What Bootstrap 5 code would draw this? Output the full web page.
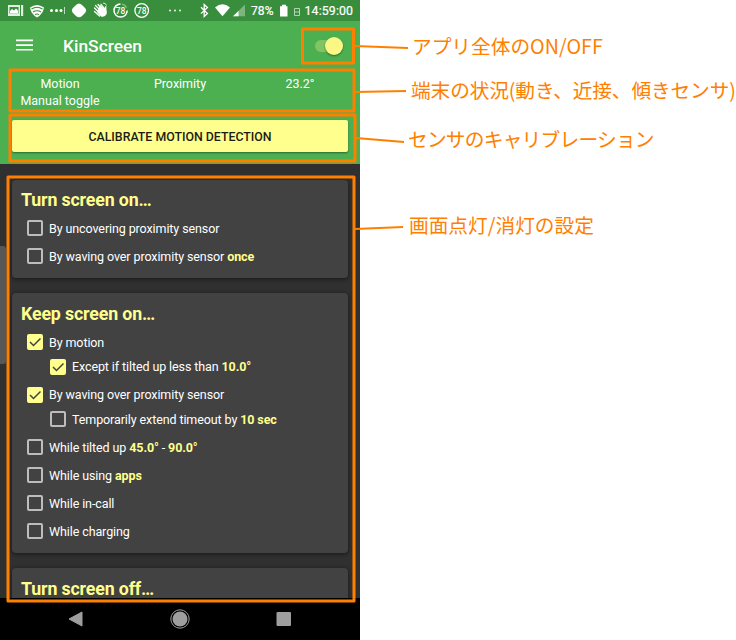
<!DOCTYPE html>
<html lang="ja">
<head>
<meta charset="utf-8">
<meta name="viewport" content="width=device-width, initial-scale=1">
<title>KinScreen</title>
<link href="https://cdn.jsdelivr.net/npm/bootstrap@5.3.0/dist/css/bootstrap.min.css" rel="stylesheet">
<style>
body{width:736px;height:640px;overflow:hidden;background:#fff;font-family:Roboto,"Noto Sans CJK JP",sans-serif;font-size:12.5px;line-height:17px}
.phone{width:360px;height:640px;background:#303030;color:#fff}
.statusbar{height:21px;background:#388e3c;flex:none}
.statusbar svg{display:block}
.appbar{height:143px;background:#4caf50;flex:none}
.toolbar{height:49px;padding:0 16px}
.toolbar>svg{margin-bottom:2px}
.app-title{font-size:17.4px;font-weight:500;margin:1px 0 0 30px}
.toggle-track{width:28px;height:12px;border-radius:6px;background:#81c462;margin-right:1px}
.toggle-thumb{width:18px;height:18px;border-radius:50%;background:#fbf785;box-shadow:0 1px 2px #0006}
.stats{height:50px;padding:5px 0 0}
.stats>div{width:120px}
.calibrate{margin:0 12px;height:32px;width:336px;border-radius:2px;background:#ffff8d;color:#1c1c12;font-size:12.35px;font-weight:500;box-shadow:0 1px 2px #0006;padding:2px 0 0;border:0}
.scroller{padding:16px 12px 0;gap:15px}
.scrollthumb{left:0;top:82px;width:6px;height:118px;background:#575757;border-radius:0 3px 3px 0}
.panel{background:#424242;border-radius:4px;box-shadow:0 1px 4px #0008;flex:none;padding:7px 9px 0;font-size:12.5px;letter-spacing:-.1px}
.panel+.panel{padding-top:8px}
.panel h2{font-size:17.8px;line-height:26px;font-weight:700;color:#ffff8d;margin:0 0 1px;letter-spacing:-.15px}
.opt{height:28px;padding-left:6px}
.sub{height:24.5px;padding:0 0 3px 29px}
.opt b,.sub b{color:#ffff8d;font-weight:700}
.box{width:16px;height:16px;border:2px solid #bdbdbd;border-radius:2px;margin-right:6px;flex:none}
.box.on{background:#ffff8d;border-color:#ffff8d}
.box svg{display:block}
.navkeys{height:42px;background:#000;flex:none}
.navkeys svg{display:block}
.marks{left:0;top:0;pointer-events:none}
.note{color:#ff8000;font-family:"Noto Sans CJK JP",sans-serif;font-size:19.7px;line-height:28px;white-space:nowrap}
.tight{letter-spacing:-.75px}
.snug{letter-spacing:-.12px}
</style>
</head>
<body class="position-relative">
<main class="phone d-flex flex-column">
  <div class="statusbar">
    <svg width="360" height="21" fill="#fff" font-family="Roboto,sans-serif">
      <path d="M8 5h12v11H8zM21 5h2.200v11H21z" opacity=".85"/>
      <path d="M9.500 7h9v6.500h-9z" fill="#388e3c"/><path d="M10 13.500V11l2-2 2 1.500 2-2 2 2v3z"/>
      <path d="M30 7.500Q37 2.500 44 7.500Q43 14 37 17.500Q31 14 30 7.500z"/>
      <path d="M31.500 9Q37 5.500 42.500 9M33 12Q37 9.500 41 12M35 14.500Q37 13.500 39 14.500" fill="none" stroke="#388e3c" stroke-width="1.200"/>
      <circle cx="51.500" cy="10.500" r="1.500"/><circle cx="56.500" cy="10.500" r="1.500"/><circle cx="61" cy="10.500" r="1.500"/><path d="M64 7h1v7h-1z" opacity=".7"/>
      <path d="M79 3.500Q80.500 3.500 82 5L84.800 7.800Q87.500 10.500 84.800 13.200L82 16Q79 18.500 76 16L73.200 13.200Q70.500 10.500 73.200 7.800L76 5Q77.500 3.500 79 3.500z"/>
      <path d="M97 12l4 4.500q3 1 5-1.500 1.500-2 .5-5l-.2-4q-1.800-.2-1.600 3l-4.500-4z"/>
      <path d="M94.500 8l5 5M95.500 5.500l6 6M98 4.500l5.500 6M101 4.300l4 5M94.500 11.500l5 4.500" stroke="#fff" stroke-width="1.300" stroke-linecap="round"/>
      <path d="M103 3q3 0 3.500 2.500" fill="none" stroke="#fff" stroke-width=".8"/>
      <path d="M120.500 3.900A6.600 6.600 0 1 0 127.200 10.500" fill="none" stroke="#fff" stroke-width="1.500"/><path d="M122 4.100a6.600 6.600 0 0 1 4.500 3.500" fill="none" stroke="#fff" stroke-width="1.400" opacity=".45"/>
      <text x="115.700" y="14" font-size="9.300" font-weight="500" textLength="9.600" lengthAdjust="spacingAndGlyphs">78</text>
      <circle cx="141.700" cy="10.500" r="6.800" fill="none" stroke="#fff" stroke-width="1.300"/>
      <text x="136.900" y="14" font-size="9.300" font-weight="500" textLength="9.600" lengthAdjust="spacingAndGlyphs">78</text>
      <circle cx="170" cy="10.500" r=".9"/><circle cx="175" cy="10.500" r=".9"/><circle cx="180" cy="10.500" r=".9"/>
      <path d="M201 7.200l6.400 6.400-3.200 2.900V4.500l3.200 2.900-6.400 6.200" fill="none" stroke="#fff" stroke-width="1.300"/>
      <path d="M215 7.500Q222.500 1.200 230 7.500L222.500 16.200z"/>
      <path d="M245 4.500v11.800h-12z" opacity=".35"/><path d="M238.500 11v5.300H233z"/>
      <text x="251" y="15.200" font-size="12" textLength="22.500" stroke="#fff" stroke-width=".2">78%</text>
      <path d="M282 4.700h4v1.500h1.500v10.200H280V6.200h2z"/>
      <path d="M294.500 8.500h5v7h-5zM294.500 12h5" fill="none" stroke="#fff" opacity=".6"/>
      <text x="304.500" y="15.200" font-size="12.300" textLength="48.500" stroke="#fff" stroke-width=".2">14:59:00</text>
    </svg>
  </div>
  <header class="appbar">
    <div class="toolbar d-flex align-items-center">
      <svg width="17" height="12" fill="#fff"><path d="M0 .5h17v1.700H0zM0 5.200h17v1.700H0zM0 9.900h17v1.700H0z"/></svg>
      <div class="app-title">KinScreen</div>
      <div class="toggle-track ms-auto d-flex align-items-center justify-content-end"><div class="toggle-thumb"></div></div>
    </div>
    <div class="stats d-flex text-center">
      <div>Motion<br>Manual toggle</div><div>Proximity</div><div>23.2°</div>
    </div>
    <button class="calibrate btn d-block">CALIBRATE MOTION DETECTION</button>
  </header>
  <section class="scroller position-relative d-flex flex-column flex-fill overflow-hidden">
    <div class="scrollthumb position-absolute"></div>
    <div class="panel" style="height:98px">
      <h2>Turn screen on…</h2>
      <div class="opt d-flex align-items-center"><i class="box"></i><span>By uncovering proximity sensor</span></div>
      <div class="opt d-flex align-items-center"><i class="box"></i><span>By waving over proximity sensor <b>once</b></span></div>
    </div>
    <div class="panel" style="height:260px">
      <h2>Keep screen on…</h2>
      <div class="opt d-flex align-items-center"><i class="box on"><svg width="12" height="12"><path d="M1 6l3.500 3.500L11.500 2.500" fill="none" stroke="#424242" stroke-width="1.500"/></svg></i><span>By motion</span></div>
      <div class="sub d-flex align-items-center"><i class="box on"><svg width="12" height="12"><path d="M1 6l3.500 3.500L11.500 2.500" fill="none" stroke="#424242" stroke-width="1.500"/></svg></i><span>Except if tilted up less than <b>10.0°</b></span></div>
      <div class="opt d-flex align-items-center"><i class="box on"><svg width="12" height="12"><path d="M1 6l3.500 3.500L11.500 2.500" fill="none" stroke="#424242" stroke-width="1.500"/></svg></i><span>By waving over proximity sensor</span></div>
      <div class="sub d-flex align-items-center"><i class="box"></i><span>Temporarily extend timeout by <b>10 sec</b></span></div>
      <div class="opt d-flex align-items-center"><i class="box"></i><span>While tilted up <b>45.0°</b> - <b>90.0°</b></span></div>
      <div class="opt d-flex align-items-center"><i class="box"></i><span>While using <b>apps</b></span></div>
      <div class="opt d-flex align-items-center"><i class="box"></i><span>While in-call</span></div>
      <div class="opt d-flex align-items-center"><i class="box"></i><span>While charging</span></div>
    </div>
    <div class="panel" style="height:60px"><h2>Turn screen off…</h2></div>
  </section>
  <footer class="navkeys">
    <svg width="360" height="42" fill="#9e9e9e"><path d="M69 21l13-7v14z" stroke="#9e9e9e" stroke-linejoin="round"/><circle cx="180" cy="21" r="7.500"/><circle cx="180" cy="21" r="9.200" fill="none" stroke="#9e9e9e" stroke-width="1"/><rect x="276.500" y="14" width="14.500" height="14" rx="1"/></svg>
  </footer>
</main>
<svg class="marks position-absolute" width="736" height="640" fill="none" stroke="#ff8000" stroke-width="3" stroke-linejoin="round">
  <rect x="302.500" y="29" width="51" height="34"/>
  <rect x="10" y="70" width="344" height="41"/>
  <rect x="10" y="115" width="345" height="46"/>
  <rect x="8" y="177" width="346" height="424"/>
  <path d="M355 46l53 2M355 92l51-1M356 138l48 4M355 229l48-2" stroke-width="2"/>
</svg>
<div class="note position-absolute" style="left:412px;top:32px">アプリ全体のON/OFF</div>
<div class="note snug position-absolute" style="left:411px;top:76px">端末の状況(動き、近接、傾きセンサ)</div>
<div class="note tight position-absolute" style="left:408px;top:125px">センサのキャリブレーション</div>
<div class="note position-absolute" style="left:409px;top:211px">画面点灯/消灯の設定</div>
<script src="https://cdn.jsdelivr.net/npm/bootstrap@5.3.0/dist/js/bootstrap.bundle.min.js"></script>
</body>
</html>
